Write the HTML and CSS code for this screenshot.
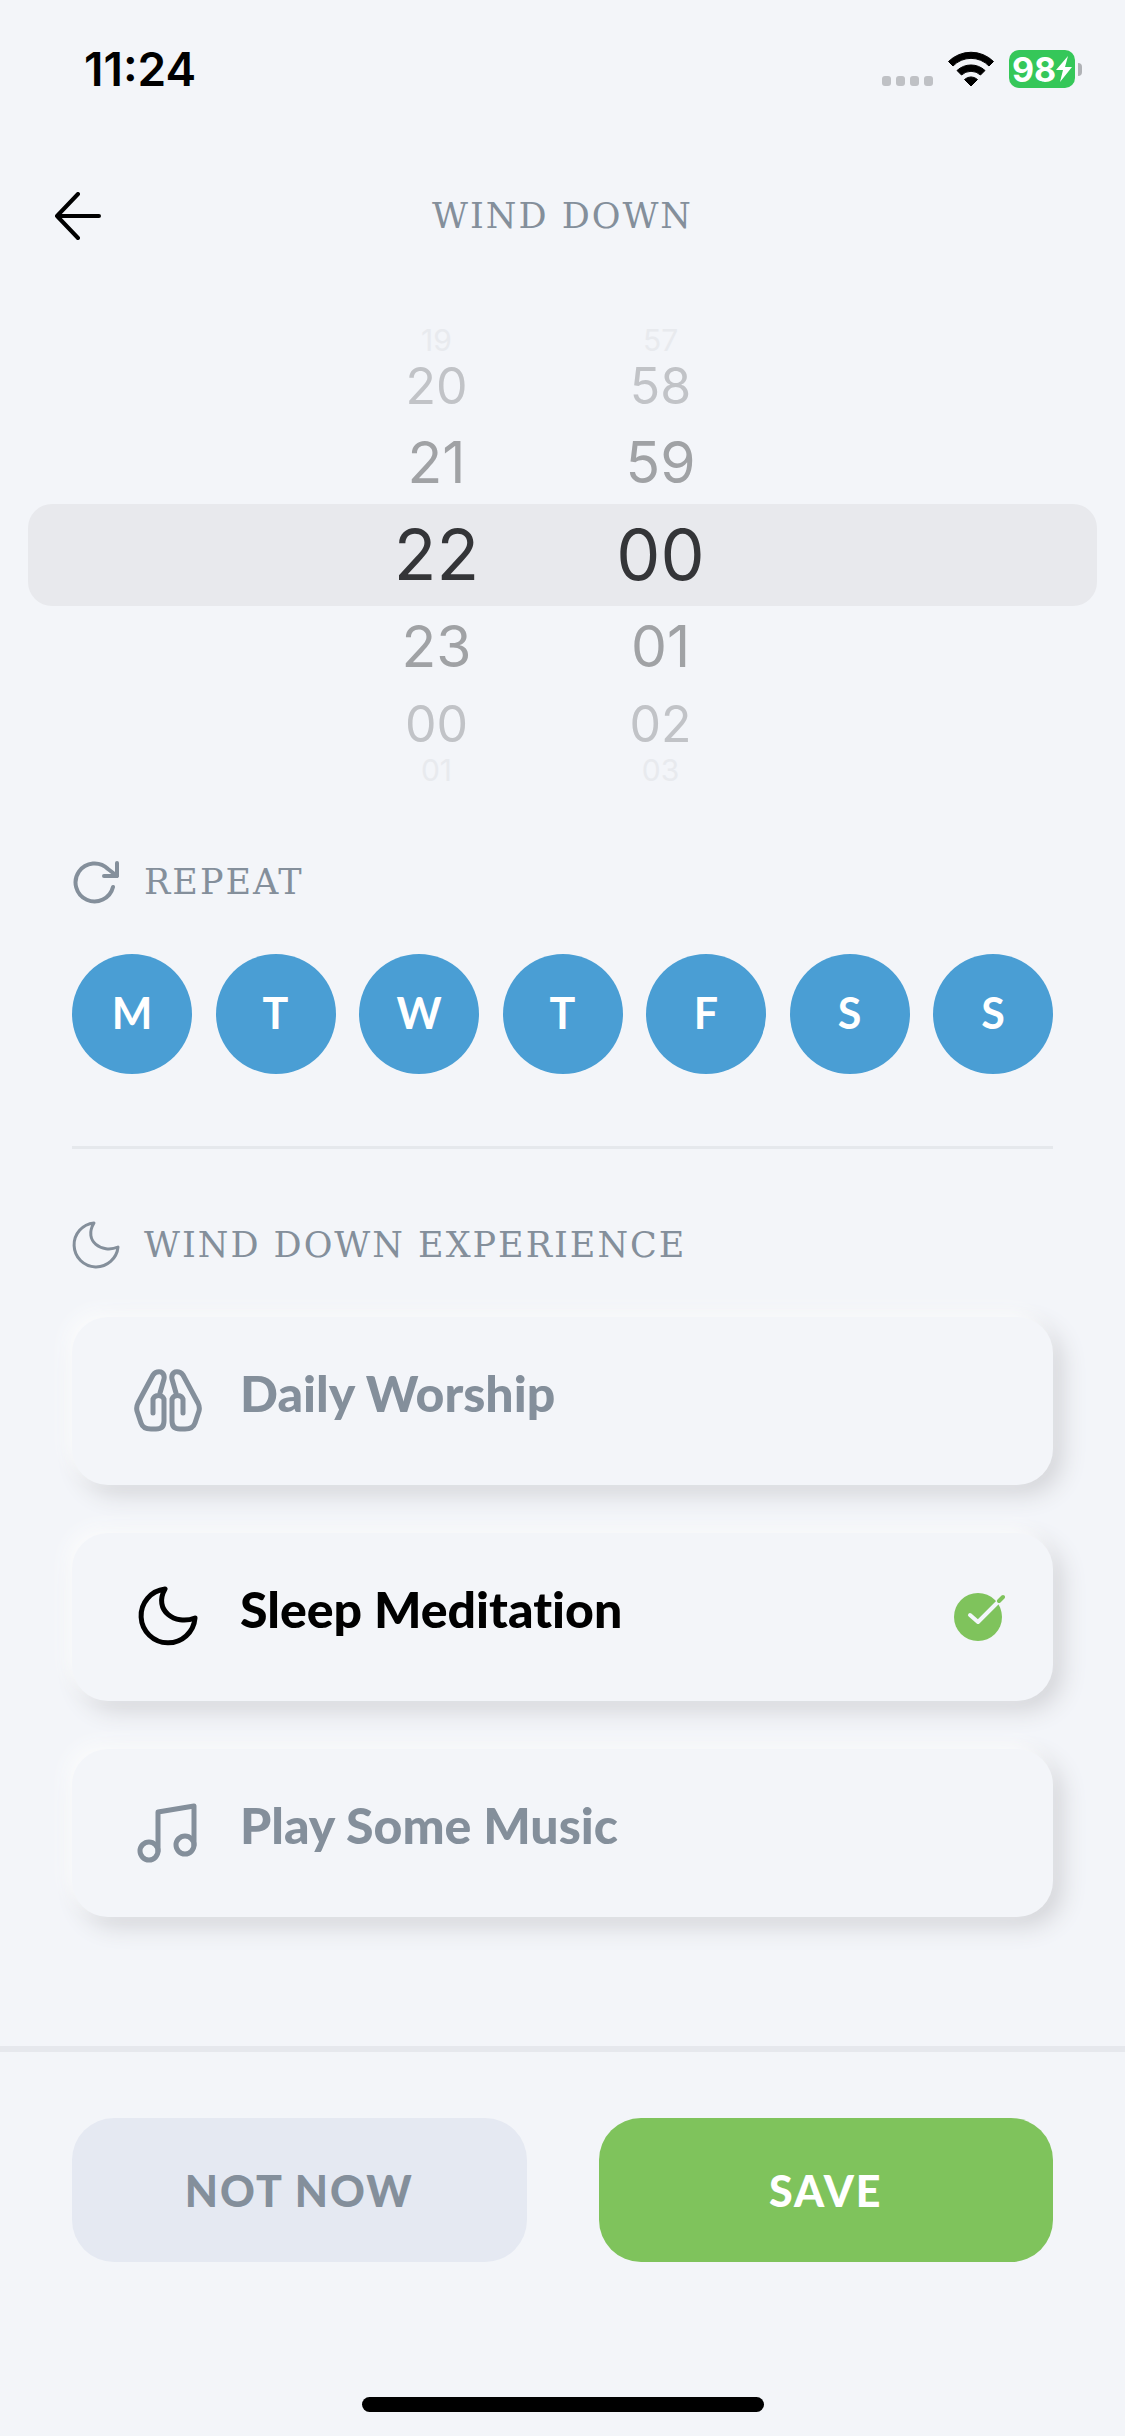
FILE: index.html
```html
<!DOCTYPE html>
<html lang="en">
<head>
  <meta charset="UTF-8" />
  <title>Wind Down</title>
  <meta name="viewport" content="width=device-width, initial-scale=1.0" />
  <link rel="stylesheet" href="styles.css">
</head>
<body>
  <div class="status-bar">
    <span class="time">11:24</span>
    <div class="status-icons">
      <svg class="dots" viewBox="0 0 51 10" fill="#bfc1c5">
        <rect x="0" width="9" height="10" rx="3" />
        <rect x="14" width="9" height="10" rx="3" />
        <rect x="28" width="9" height="10" rx="3" />
        <rect x="42" width="9" height="10" rx="3" />
      </svg>
      <svg class="wifi" viewBox="0 0 46 36">
        <path d="M.5 10.500 A32 32 0 0 1 45.500 10.500 L41 15 A25 25 0 0 0 5 15 Z" stroke="#000" stroke-linejoin="round" />
        <path d="M9 19.500 A20.500 20.500 0 0 1 37 19.500 L32.500 24 A14 14 0 0 0 13.500 24 Z" stroke="#000" stroke-linejoin="round" />
        <path d="M16.500 28.500 A9.500 9.500 0 0 1 29.500 28.500 L23 35 Z" stroke="#000" stroke-linejoin="round" />
      </svg>
      <div class="battery">
        <div class="battery-body">
          <span>98</span>
          <svg class="bolt" viewBox="0 0 16 26"><path d="M12 0 L0 14 H7 L4 26 L16 11 H9 Z" fill="#fff" /></svg>
        </div>
        <div class="battery-cap"></div>
      </div>
    </div>
  </div>

  <header class="header">
    <button class="back" aria-label="Back">
      <svg viewBox="0 0 48 48"><path d="M45 24 H3 M24 2 L3 24 L24 46" /></svg>
    </button>
    <h1>WIND DOWN</h1>
  </header>

  <main>
    <div class="picker">
      <ul class="wheel" role="listbox" aria-label="Hour">
        <li class="far" role="option">19</li>
        <li class="mid" role="option">20</li>
        <li class="near" role="option">21</li>
        <li class="current" role="option" aria-selected="true">22</li>
        <li class="near" role="option">23</li>
        <li class="mid" role="option">00</li>
        <li class="far" role="option">01</li>
      </ul>
      <ul class="wheel" role="listbox" aria-label="Minute">
        <li class="far" role="option">57</li>
        <li class="mid" role="option">58</li>
        <li class="near" role="option">59</li>
        <li class="current" role="option" aria-selected="true">00</li>
        <li class="near" role="option">01</li>
        <li class="mid" role="option">02</li>
        <li class="far" role="option">03</li>
      </ul>
    </div>

    <section class="section repeat">
      <h2>
        <svg class="section-icon" viewBox="0 0 48 48" stroke-width="4">
          <path d="M41 29 A19 19 0 1 1 36 11 L45 18 M45 5 V18 H32" />
        </svg>
        REPEAT
      </h2>
      <div class="days">
        <button aria-pressed="true">M</button>
        <button aria-pressed="true">T</button>
        <button aria-pressed="true">W</button>
        <button aria-pressed="true">T</button>
        <button aria-pressed="true">F</button>
        <button aria-pressed="true">S</button>
        <button aria-pressed="true">S</button>
      </div>
    </section>

    <section class="section experience">
      <h2>
        <svg class="section-icon" viewBox="0 0 48 48" stroke-width="3">
          <path d="M22 2 A22 22 0 1 0 46 26 C30 33 11 20 22 2 Z" />
        </svg>
        WIND DOWN EXPERIENCE
      </h2>
      <label class="card">
        <input type="radio" name="experience" value="worship" />
        <svg class="card-icon" viewBox="0 0 68 68">
          <path d="M19 46 V32 A6 6 0 0 1 30 32 V54 Q30 62 22 62 H17 Q9 62 7 56 L3 44 Q2 40 4 36 L19 8 Q22 4 27 5 Q31 7 30 12 L26 26" />
          <path d="M49 46 V32 A6 6 0 0 0 38 32 V54 Q38 62 46 62 H51 Q59 62 61 56 L65 44 Q66 40 64 36 L49 8 Q46 4 41 5 Q37 7 38 12 L42 26" />
        </svg>
        <span class="card-text">Daily Worship</span>
      </label>
      <label class="card">
        <input type="radio" name="experience" value="sleep" checked />
        <svg class="card-icon" viewBox="0 0 68 68">
          <path d="M31 6 A27 27 0 1 0 61 35 C41 43 19 27 31 6 Z" />
        </svg>
        <span class="card-text">Sleep Meditation</span>
        <svg class="check" viewBox="0 0 52 52">
          <circle cx="25" cy="26" r="24" fill="#7fc35c" />
          <path d="M17 24 L25 31 L45 11" stroke="#f3f6fb" />
          <path d="M46 10 L50 6" stroke="#7fc35c" />
        </svg>
      </label>
      <label class="card">
        <input type="radio" name="experience" value="music" />
        <svg class="card-icon" viewBox="0 0 68 68">
          <circle cx="15" cy="52" r="9" />
          <circle cx="51" cy="46" r="9" />
          <path d="M24 52 V13 L60 7 V46" />
        </svg>
        <span class="card-text">Play Some Music</span>
      </label>
    </section>
  </main>

  <footer>
    <div class="actions">
      <button class="not-now">NOT NOW</button>
      <button class="save">SAVE</button>
    </div>
    <div class="home-indicator"></div>
  </footer>
</body>
</html>
```

FILE: styles.css
```css
* {
  box-sizing: border-box;
}
body {
  margin: 0;
  min-height: 100vh;
  display: flex;
  flex-direction: column;
  background: #f3f5f9;
  color: #000;
  font-family: Lato, sans-serif;
}
svg {
  display: block;
  flex: none;
}
button {
  border: none;
  padding: 0;
  font-family: inherit;
  cursor: pointer;
}
h1, h2 {
  margin: 0;
  font-family: "DejaVu Serif", serif;
  font-size: 35px;
  line-height: 48px;
  font-weight: normal;
  letter-spacing: 2px;
  color: #848f9b;
}

/* status bar */
.status-bar {
  display: flex;
  justify-content: space-between;
  align-items: center;
  height: 138px;
  padding: 0 43px 0 84px;
  font-family: Inter, sans-serif;
}
.time {
  font-size: 46px;
  font-weight: 600;
}
.status-icons {
  display: flex;
  align-items: center;
  gap: 15px;
}
.dots {
  width: 51px;
  height: 10px;
  margin-top: 24px;
}
.wifi {
  width: 46px;
  height: 36px;
}
.battery {
  display: flex;
  align-items: center;
  gap: 3px;
}
.battery-body {
  display: flex;
  align-items: center;
  justify-content: center;
  width: 66px;
  height: 38px;
  border-radius: 10px;
  background: #35c759;
  color: #fff;
  font-size: 34px;
  font-weight: 700;
}
.bolt {
  width: 16px;
  height: 26px;
}
.battery-cap {
  width: 4px;
  height: 13px;
  border-radius: 0 4px 4px 0;
  background: #b0b2b6;
}

/* header */
.header {
  display: grid;
  grid-template-columns: 48px 1fr 48px;
  align-items: center;
  height: 156px;
  padding: 0 54px;
}
.header h1 {
  text-align: center;
}
.back {
  background: none;
}
.back svg {
  width: 48px;
  height: 48px;
  fill: none;
  stroke: #000;
  stroke-width: 4px;
  stroke-linecap: round;
  stroke-linejoin: round;
}

/* time picker */
.picker {
  display: grid;
  grid-template-columns: 224px 224px;
  justify-content: center;
  position: relative;
  margin: 36px 28px 0;
  padding-right: 28px;
}
/* band behind the selected row */
.picker::before {
  content: "";
  position: absolute;
  z-index: -1;
  inset: 174px 0;
  border-radius: 24px;
  background: #e8e9ed;
}
.wheel {
  list-style: none;
  margin: 0;
  padding: 0;
  font-family: Inter, sans-serif;
  text-align: center;
}
.far {
  font-size: 30px;
  line-height: 20px;
  color: #e8eaee;
}
.mid {
  font-size: 50px;
  line-height: 72px;
  color: #c1c3c7;
}
.near {
  font-size: 57px;
  line-height: 82px;
  color: #a0a2a5;
}
.current {
  font-size: 70px;
  line-height: 102px;
  color: #343538;
}

main {
  flex: 1;
}
.section {
  margin: 0 72px;
}
.section h2 {
  display: flex;
  align-items: center;
  gap: 24px;
}
.section-icon {
  width: 48px;
  height: 48px;
  fill: none;
  stroke: #848f9b;
  stroke-linecap: round;
  stroke-linejoin: round;
}

/* repeat days */
.repeat {
  padding: 78px 0 72px;
  border-bottom: 3px solid #e5e8ec;
}
.days {
  display: flex;
  justify-content: space-between;
  margin-top: 48px;
}
.days button {
  width: 120px;
  height: 120px;
  padding-bottom: 4px;
  border-radius: 50%;
  background: #4a9ed4;
  color: #fff;
  font-size: 43px;
  font-weight: 700;
}

/* experience cards */
.experience {
  padding-top: 72px;
}
.card {
  display: flex;
  align-items: center;
  height: 168px;
  margin-top: 48px;
  padding: 0 48px 0 62px;
  border-radius: 36px;
  background: #f3f5f9;
  box-shadow: -7px -7px 16px #fafbfc, 9px 9px 24px #d2d3d7;
  color: #848f9b;
  cursor: pointer;
}
.card input {
  position: absolute;
  opacity: 0;
}
.card-icon {
  width: 68px;
  height: 68px;
  fill: none;
  stroke: currentColor;
  stroke-width: 5px;
  stroke-linecap: round;
  stroke-linejoin: round;
}
.card-text {
  flex: 1;
  margin-left: 38px;
  padding-bottom: 16px;
  font-size: 50px;
  line-height: 60px;
  font-weight: 900;
  font-variant-ligatures: none;
}
.card:has(:checked) {
  color: #000;
}
.check {
  width: 52px;
  height: 52px;
  fill: none;
  stroke-width: 4px;
  stroke-linecap: round;
  stroke-linejoin: round;
}

/* bottom actions */
footer {
  border-top: 6px solid #e6e8ed;
}
.actions {
  display: grid;
  grid-template-columns: 1fr 1fr;
  gap: 72px;
  padding: 66px 72px 135px;
}
.actions button {
  height: 144px;
  border-radius: 42px;
  font-size: 43px;
  font-weight: 900;
  letter-spacing: 2px;
}
.not-now {
  background: #e5e9f2;
  color: #848f9b;
}
.save {
  background: #7fc35c;
  color: #fff;
}
.home-indicator {
  width: 402px;
  height: 15px;
  margin: 0 auto 24px;
  border-radius: 8px;
  background: #000;
}
```
